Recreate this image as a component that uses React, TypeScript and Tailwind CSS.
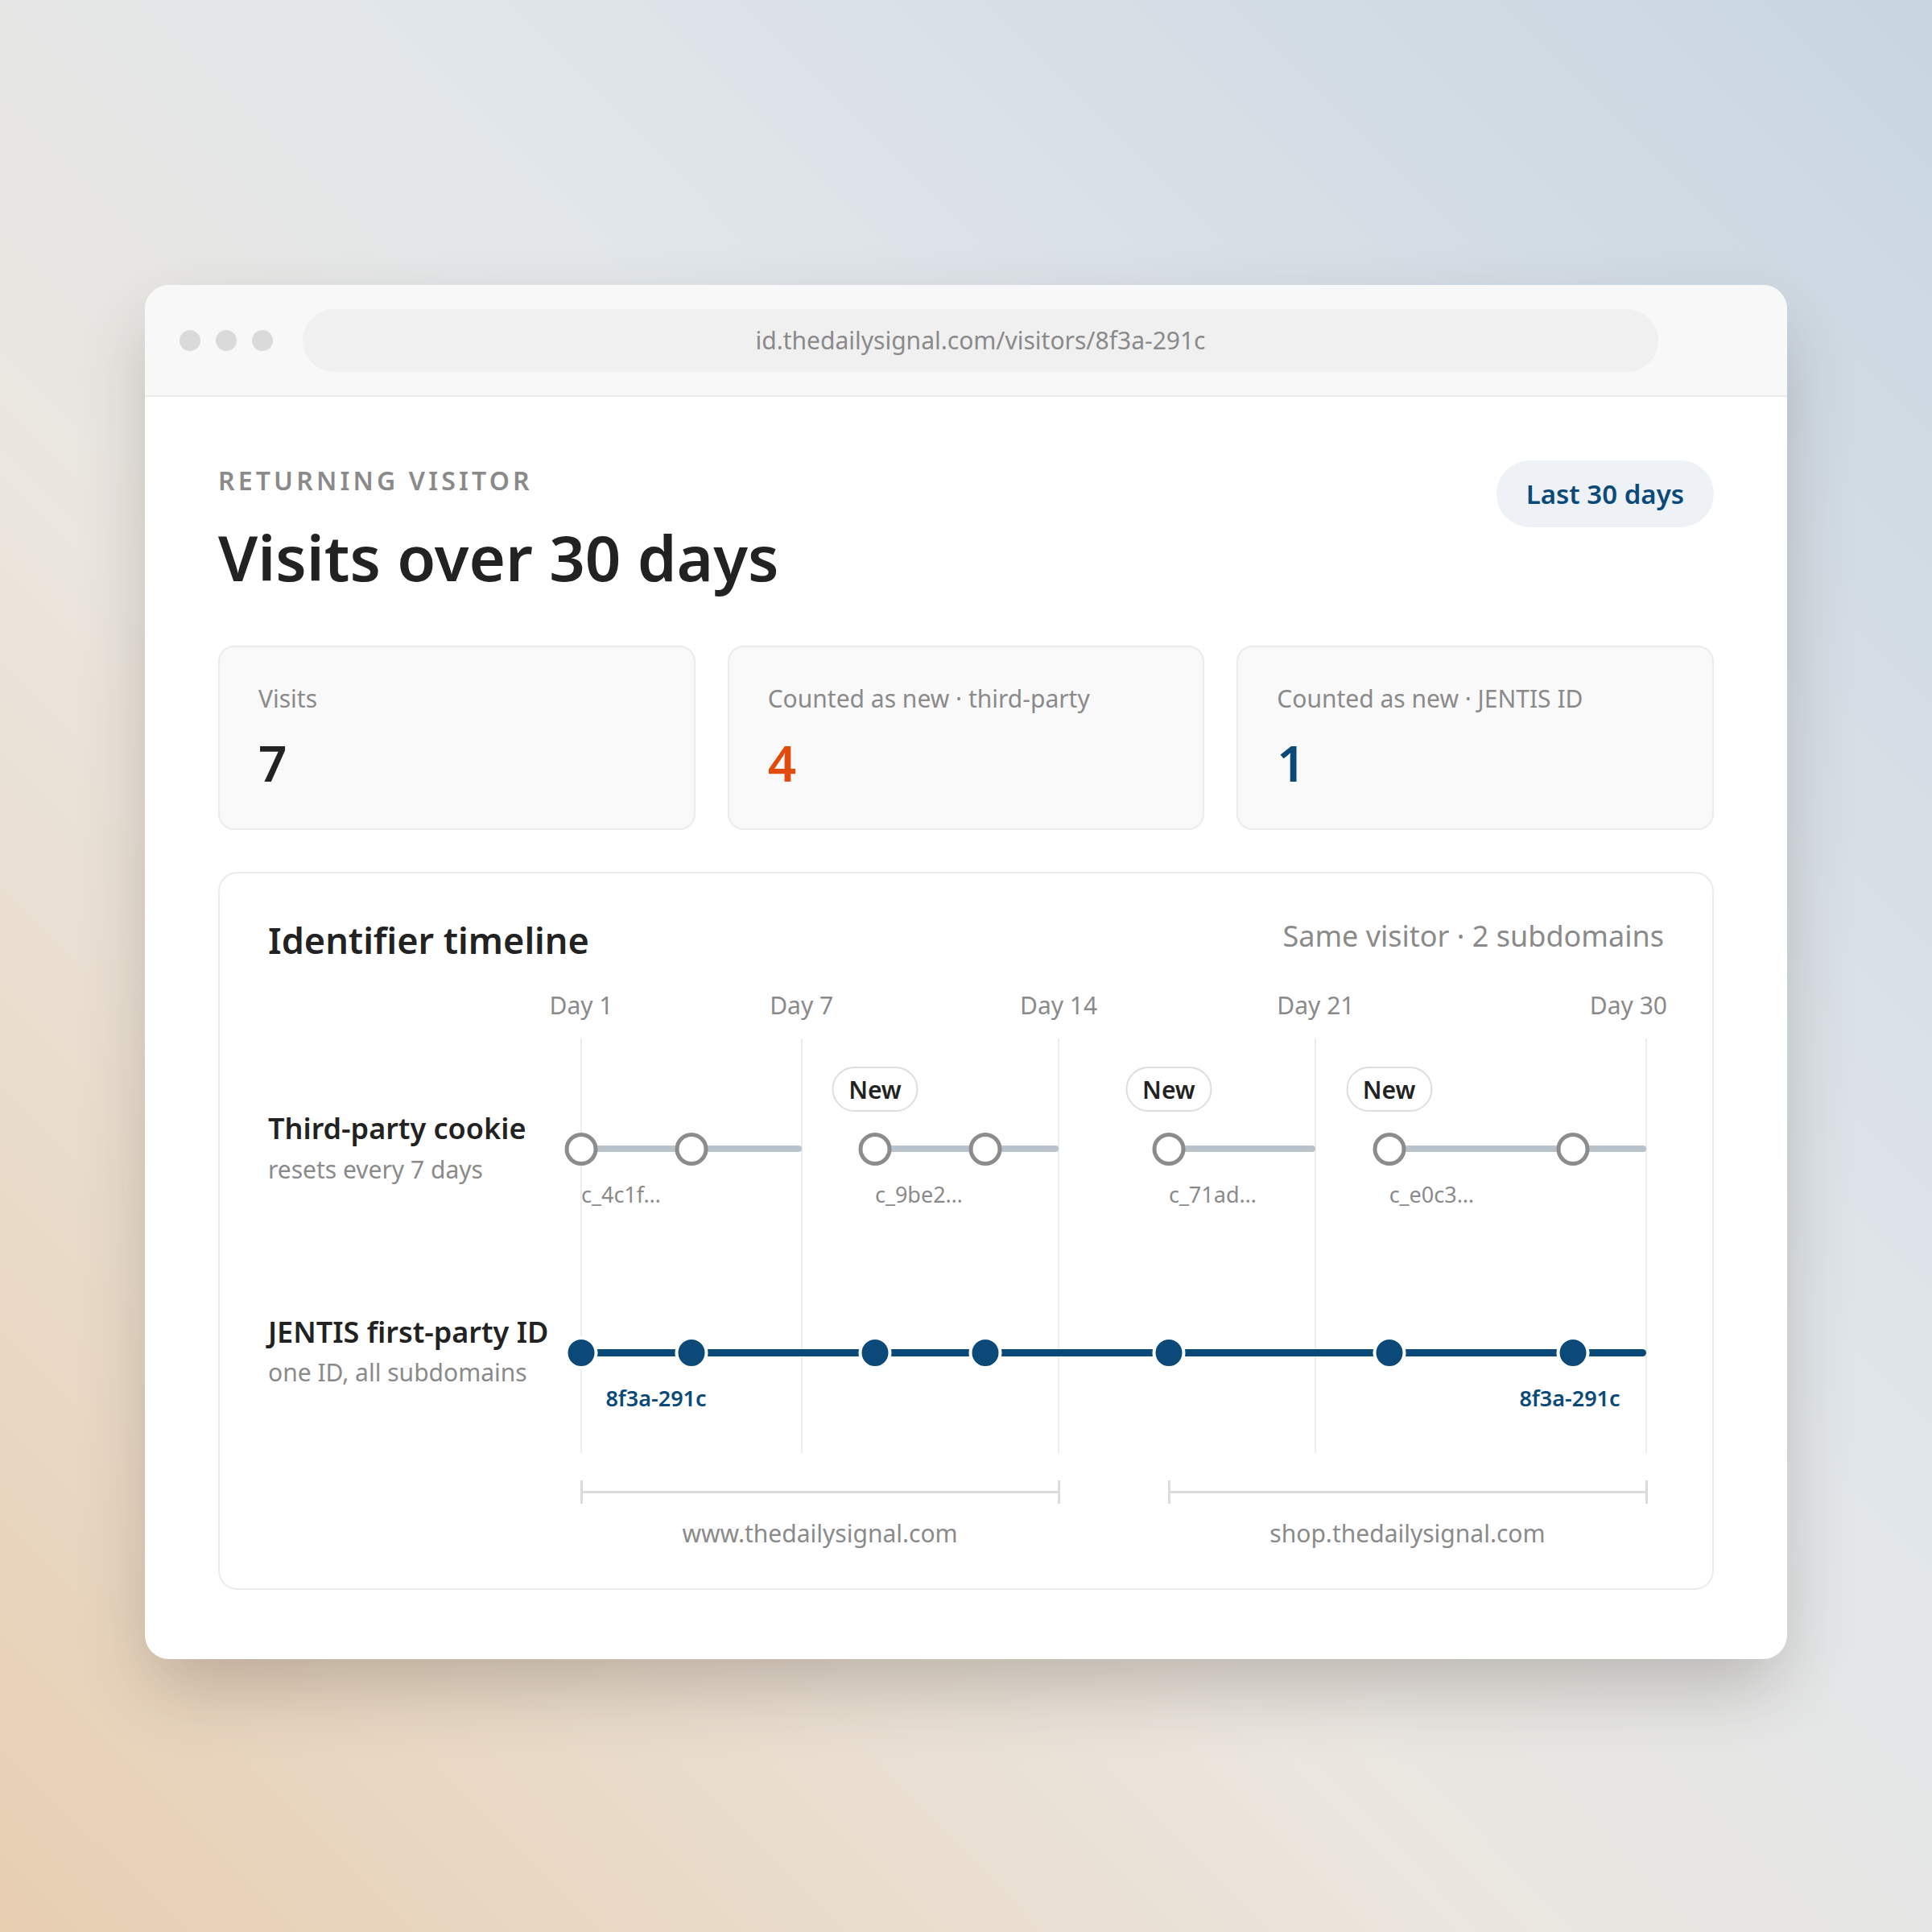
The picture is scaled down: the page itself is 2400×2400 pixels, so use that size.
const DAY_PX = 1323 / 29;
const dayX = (d: number) => (d - 1) * DAY_PX;

const visitDays = [1, 4, 9, 12, 17, 23, 28];

const cookieSpans = [
  { from: 1, to: 7, id: "c_4c1f…", fresh: false },
  { from: 9, to: 14, id: "c_9be2…", fresh: true },
  { from: 17, to: 21, id: "c_71ad…", fresh: true },
  { from: 23, to: 30, id: "c_e0c3…", fresh: true },
];

const dayTicks = [1, 7, 14, 21, 30];

const domains = [
  { from: 1, to: 14, host: "www.thedailysignal.com" },
  { from: 17, to: 30, host: "shop.thedailysignal.com" },
];

const stats = [
  { label: "Visits", value: "7", color: "text-[#222222]" },
  { label: "Counted as new · third-party", value: "4", color: "text-[#e14b0e]" },
  { label: "Counted as new · JENTIS ID", value: "1", color: "text-[#0b4a78]" },
];

function StatCard({ label, value, color }: { label: string; value: string; color: string }) {
  return (
    <div className="flex h-[229px] flex-col rounded-[20px] border-2 border-[#ececec] bg-[#f9f9f9] px-[48px] pt-[44px]">
      <span className="text-[30px] leading-[40px] text-[#8a8a8a]">{label}</span>
      <span className={`mt-[19px] text-[62px] font-semibold leading-[80px] ${color}`}>{value}</span>
    </div>
  );
}

function Timeline() {
  return (
    <div className="relative h-[700px]">
      {/* day ticks */}
      {dayTicks.map((d) =>
        d === 30 ? (
          <span key={d} className="absolute right-[-4px] top-[4px] whitespace-nowrap text-[30px] leading-[40px] text-[#8a8a8a]">
            Day {d}
          </span>
        ) : (
          <span
            key={d}
            className="absolute top-[4px] -translate-x-1/2 whitespace-nowrap text-[30px] leading-[40px] text-[#8a8a8a]"
            style={{ left: dayX(d) }}
          >
            Day {d}
          </span>
        )
      )}
      {dayTicks.map((d) => (
        <div
          key={`g${d}`}
          className="absolute top-[65px] h-[515px] w-[2px] -translate-x-1/2 bg-[#ededed]"
          style={{ left: dayX(d) }}
        />
      ))}

      {/* third-party cookie row */}
      {cookieSpans.map((s) => (
        <div
          key={s.id}
          className="absolute top-[198px] h-[8px] rounded-full bg-[#b9c3cb]"
          style={{ left: dayX(s.from), width: dayX(s.to) - dayX(s.from) }}
        />
      ))}
      {cookieSpans
        .filter((s) => s.fresh)
        .map((s) => (
          <span
            key={`n${s.id}`}
            className="absolute top-[100px] flex h-[56px] w-[107px] -translate-x-1/2 items-center justify-center rounded-full border-2 border-[#dedede] bg-white text-[30px] font-semibold text-[#222222]"
            style={{ left: dayX(s.from) }}
          >
            New
          </span>
        ))}
      {cookieSpans.map((s) => (
        <span
          key={`id${s.id}`}
          className="absolute top-[239px] whitespace-nowrap text-[27px] leading-[40px] text-[#8a8a8a]"
          style={{ left: dayX(s.from) }}
        >
          {s.id}
        </span>
      ))}
      {visitDays.map((d) => (
        <div
          key={`c${d}`}
          className="absolute top-[182px] h-[41px] w-[41px] -translate-x-1/2 rounded-full border-[5px] border-[#8c8c8c] bg-white"
          style={{ left: dayX(d) }}
        />
      ))}

      {/* first-party id row */}
      <div
        className="absolute top-[451px] h-[9px] rounded-full bg-[#0b4a78]"
        style={{ left: 0, width: dayX(30) }}
      />
      {visitDays.map((d) => (
        <div
          key={`j${d}`}
          className="absolute top-[435px] h-[41px] w-[41px] -translate-x-1/2 rounded-full border-4 border-white bg-[#0b4a78]"
          style={{ left: dayX(d) }}
        />
      ))}
      <span className="absolute left-[93px] top-[492px] -translate-x-1/2 whitespace-nowrap text-[27px] font-semibold leading-[40px] text-[#0b4a78]">
        8f3a-291c
      </span>
      <span className="absolute left-[1228px] top-[492px] -translate-x-1/2 whitespace-nowrap text-[27px] font-semibold leading-[40px] text-[#0b4a78]">
        8f3a-291c
      </span>

      {/* subdomain brackets */}
      {domains.map((r) => (
        <div
          key={r.host}
          className="absolute top-[614px] flex h-[29px] items-center border-x-[3px] border-[#dcdcdc]"
          style={{ left: dayX(r.from) - 1, width: dayX(r.to) - dayX(r.from) + 3 }}
        >
          <div className="h-[3px] w-full bg-[#dcdcdc]" />
        </div>
      ))}
      {domains.map((r) => (
        <span
          key={`l${r.host}`}
          className="absolute top-[660px] -translate-x-1/2 whitespace-nowrap text-[30px] leading-[40px] text-[#8a8a8a]"
          style={{ left: (dayX(r.from) + dayX(r.to)) / 2 }}
        >
          {r.host}
        </span>
      ))}
    </div>
  );
}

export default function App() {
  return (
    <div className="flex h-[2400px] w-[2400px] justify-center bg-[linear-gradient(225deg,#c8d5e1_0%,#e3e7ea_42%,#ebe6df_62%,#e7ceb1_100%)] pt-[354px] font-['Noto_Sans',sans-serif]">
      <div className="h-fit w-[2040px] overflow-hidden rounded-[30px] bg-white shadow-[0_40px_90px_-10px_rgba(60,50,40,0.28)]">
        {/* browser chrome */}
        <div className="flex h-[139px] items-center border-b-2 border-[#ebebeb] bg-[#f8f8f8] pl-[43px] pr-[160px]">
          <div className="flex gap-[19px]">
            <span className="h-[26px] w-[26px] rounded-full bg-[#dadada]" />
            <span className="h-[26px] w-[26px] rounded-full bg-[#dadada]" />
            <span className="h-[26px] w-[26px] rounded-full bg-[#dadada]" />
          </div>
          <div className="ml-[37px] flex h-[78px] flex-1 items-center justify-center rounded-full bg-[#f0f0f0] text-[30px] text-[#8a8a8a]">
            id.thedailysignal.com/visitors/8f3a-291c
          </div>
        </div>

        <div className="px-[91px] pb-[86px] pt-[84px]">
          {/* page header */}
          <div className="flex items-start justify-between">
            <div className="flex flex-col">
              <span className="text-[32px] font-semibold leading-[40px] tracking-[0.13em] text-[#8a8a8a]">
                RETURNING VISITOR
              </span>
              <h1 className="mt-[27px] text-[78px] font-semibold leading-[96px] text-[#222222]">
                Visits over 30 days
              </h1>
            </div>
            <span className="-mt-[5px] flex h-[83px] items-center rounded-full bg-[#eef1f5] px-[37px] text-[33px] font-semibold text-[#0b4a78]">
              Last 30 days
            </span>
          </div>

          {/* stats */}
          <div className="mt-[62px] grid grid-cols-3 gap-[40px]">
            {stats.map((s) => (
              <StatCard key={s.label} {...s} />
            ))}
          </div>

          {/* identifier timeline */}
          <div className="mt-[52px] rounded-[24px] border-2 border-[#ececec] px-[60px] pb-[48px] pt-[53px]">
            <div className="flex items-center justify-between">
              <h2 className="text-[45px] font-semibold leading-[60px] text-[#222222]">Identifier timeline</h2>
              <span className="-mt-[10px] text-[36px] text-[#8a8a8a]">Same visitor · 2 subdomains</span>
            </div>
            <div className="mt-[27px] grid grid-cols-[389px_1fr]">
              <div className="flex flex-col pt-[154px]">
                <span className="text-[36px] font-semibold leading-[46px] text-[#222222]">Third-party cookie</span>
                <span className="mt-[8px] text-[30px] leading-[40px] text-[#8a8a8a]">resets every 7 days</span>
                <span className="mt-[159px] whitespace-nowrap text-[36px] font-semibold leading-[46px] text-[#222222]">
                  JENTIS first-party ID
                </span>
                <span className="mt-[7px] text-[30px] leading-[40px] text-[#8a8a8a]">one ID, all subdomains</span>
              </div>
              <Timeline />
            </div>
          </div>
        </div>
      </div>
    </div>
  );
}
